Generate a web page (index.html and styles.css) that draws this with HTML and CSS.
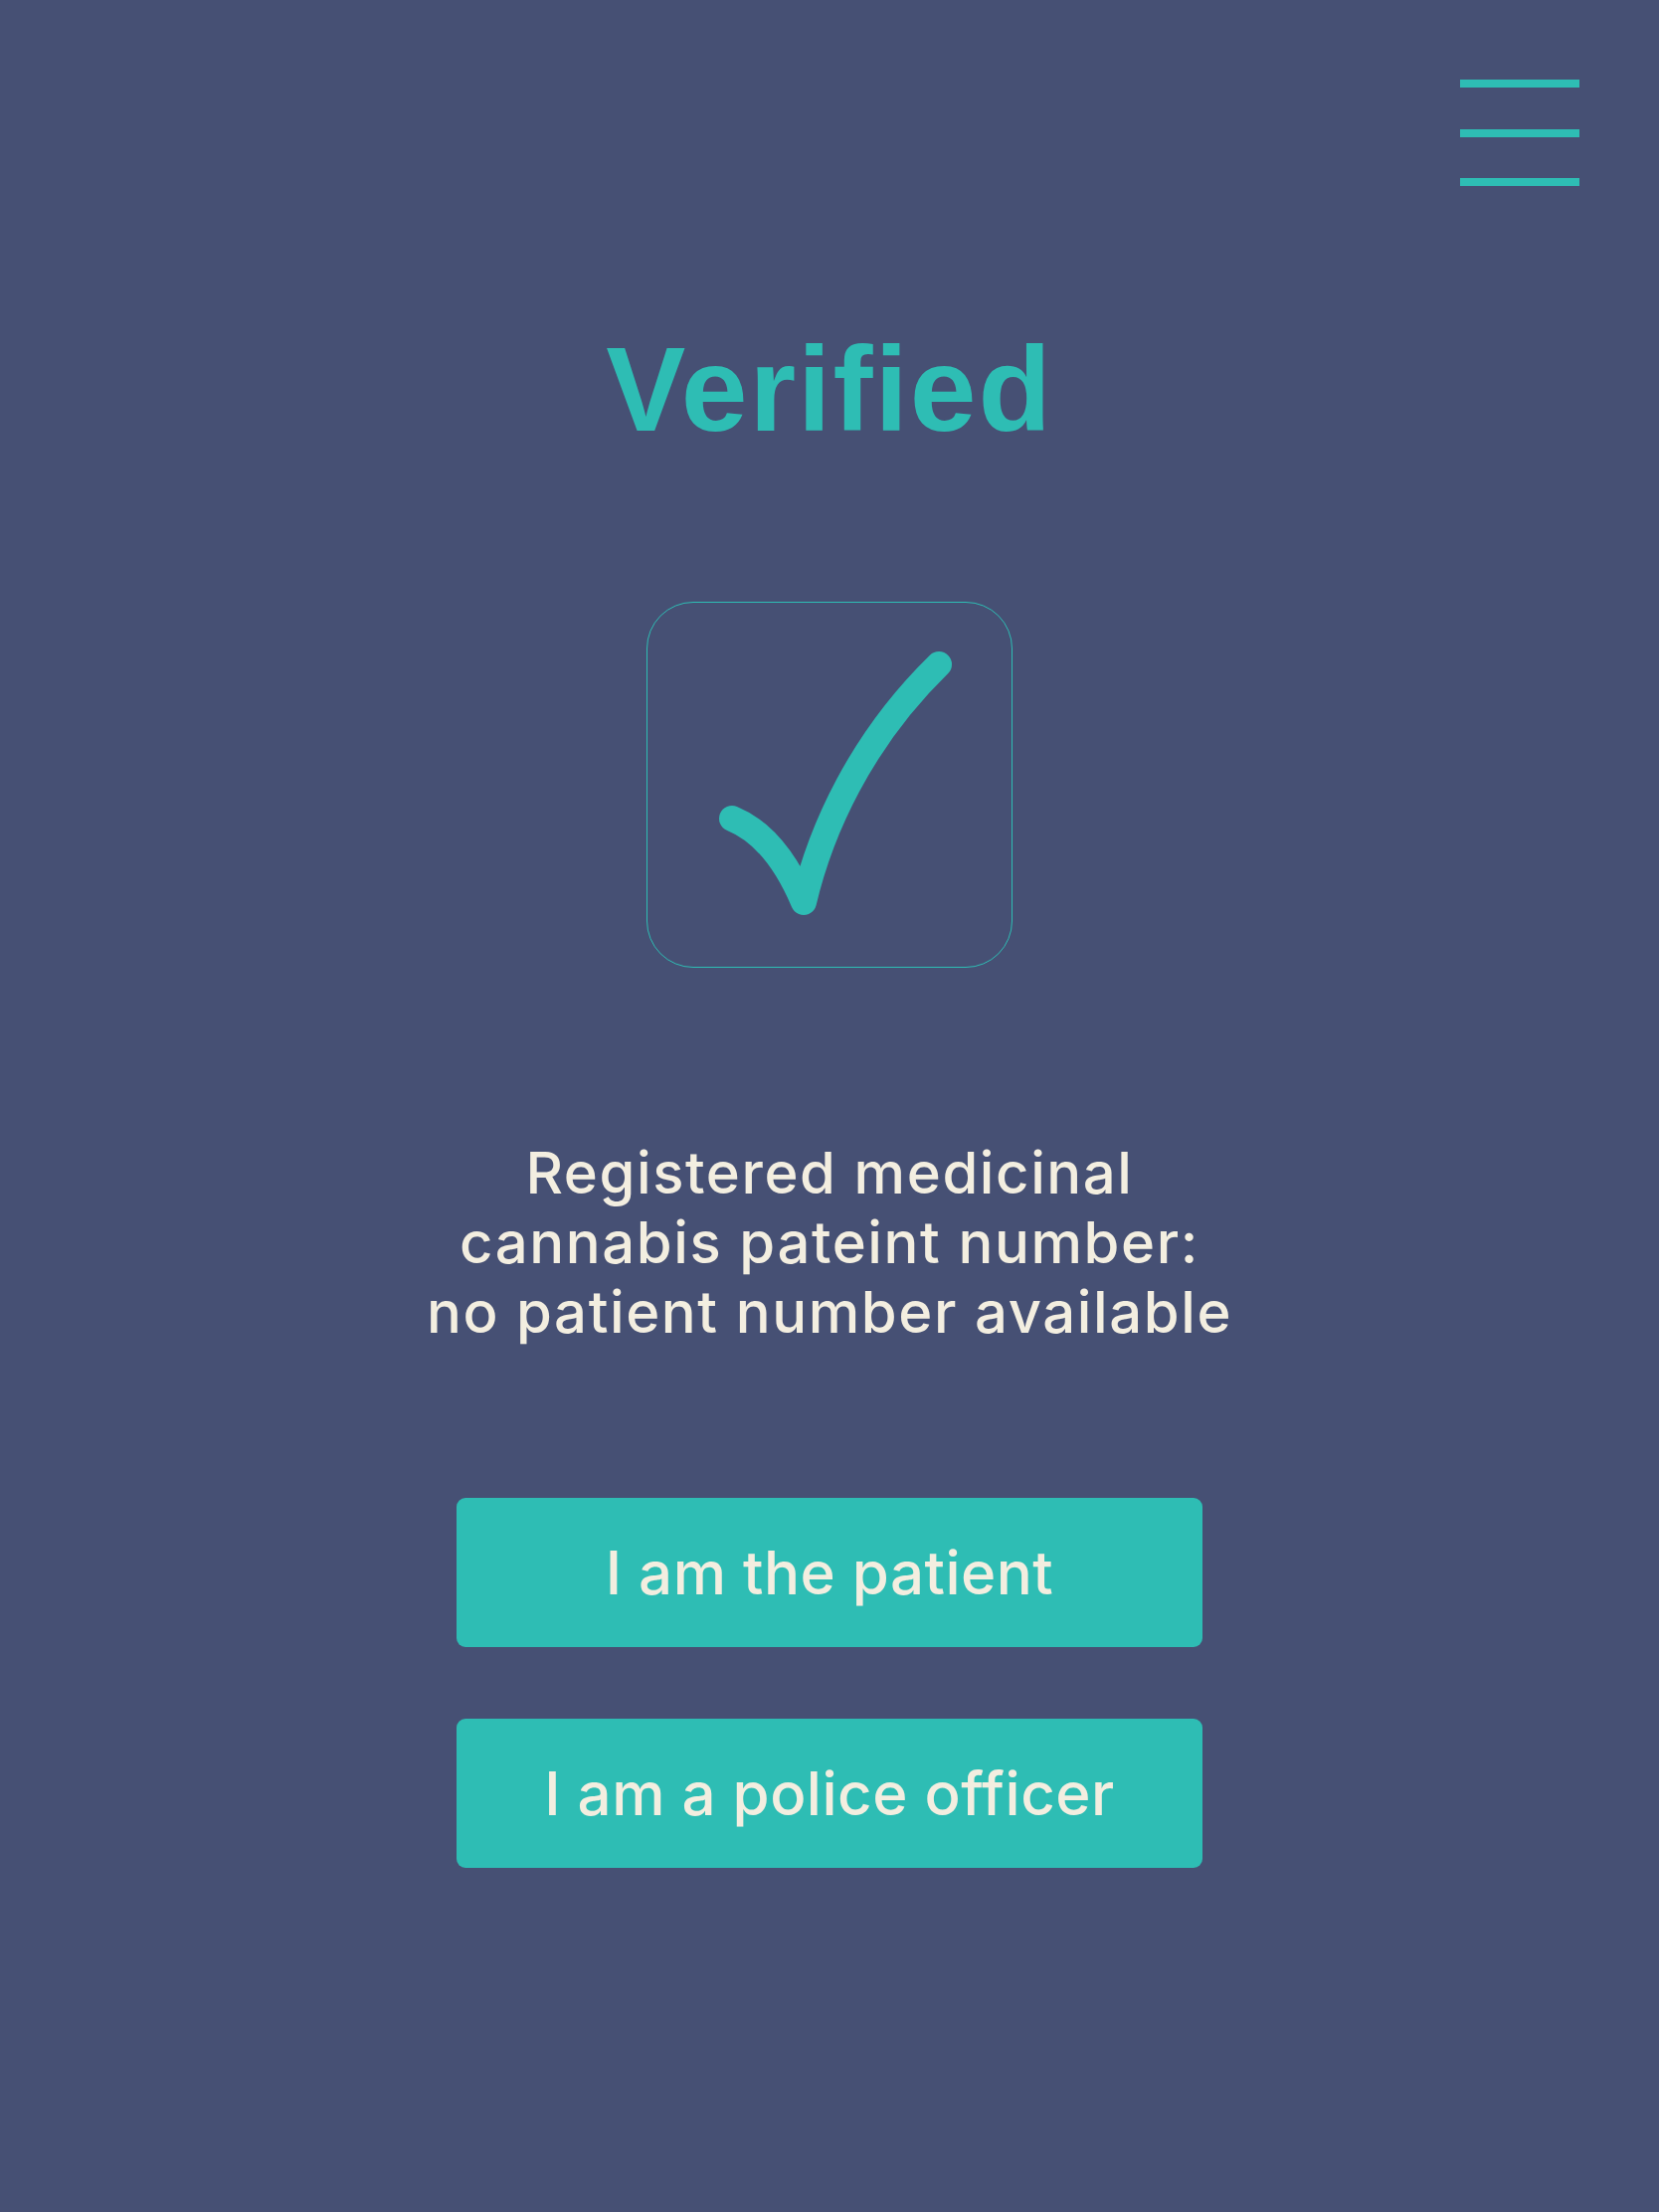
FILE: index.html
```html
<!DOCTYPE html>
<html>
<head>
  <title>Verified</title>
  <link rel="stylesheet" href="styles.css">
</head>
<body>
  <div class="topbar">
    <div class="menu">
      <span></span>
      <span></span>
      <span></span>
    </div>
  </div>
  <h1 class="title">Verified</h1>
  <div class="checkbox">
    <svg viewBox="1 1 366 366">
      <path d="M86 218 Q130 236 158 302 C175 230 215 140 294 63" />
    </svg>
  </div>
  <p class="status">Registered medicinal<br>cannabis pateint number:<br>no patient number available</p>
  <div class="actions">
    <div class="btn">I am the patient</div>
    <div class="btn">I am a police officer</div>
  </div>
</body>
</html>
```

FILE: styles.css
```css
body, html {
  margin: 0;
  width: 100%;
  min-height: 100%;
}
body {
  background-color: #465074;
  font-family: Inter, "Liberation Sans", sans-serif;
  color: #f3eee0;
  height: 2224px;
}
.topbar {
  display: flex;
  justify-content: flex-end;
  padding: 80px 80px 0 0;
}
.menu {
  display: flex;
  flex-direction: column;
  justify-content: space-between;
  width: 120px;
  height: 107px;
}
.menu span {
  display: block;
  height: 8px;
  background-color: #2ebdb4;
}
.title {
  margin: 144px 0 0 0;
  text-align: center;
  font-family: "Liberation Sans", Arial, sans-serif;
  font-weight: bold;
  font-size: 120px;
  line-height: 120px;
  letter-spacing: 2px;
  color: #2ebdb4;
}
.checkbox {
  box-sizing: border-box;
  width: 368px;
  height: 368px;
  margin: 154px auto 0 auto;
  border: 1px solid #2ebdb4;
  border-radius: 47px;
}
.checkbox svg {
  display: block;
  width: 100%;
  height: 100%;
}
.checkbox path {
  fill: none;
  stroke: #2ebdb4;
  stroke-width: 26;
  stroke-linecap: round;
  stroke-linejoin: round;
}
.status {
  margin: 171px 0 0 0;
  text-align: center;
  font-size: 58px;
  font-weight: 500;
  line-height: 70px;
  letter-spacing: 1.6px;
}
.actions {
  display: flex;
  flex-direction: column;
  align-items: center;
  gap: 72px;
  margin-top: 152px;
}
.btn {
  display: flex;
  align-items: center;
  justify-content: center;
  width: 750px;
  height: 150px;
  border-radius: 9px;
  background-color: #2ebdb4;
  font-size: 60px;
  font-weight: 500;
  letter-spacing: 0.5px;
}
```
